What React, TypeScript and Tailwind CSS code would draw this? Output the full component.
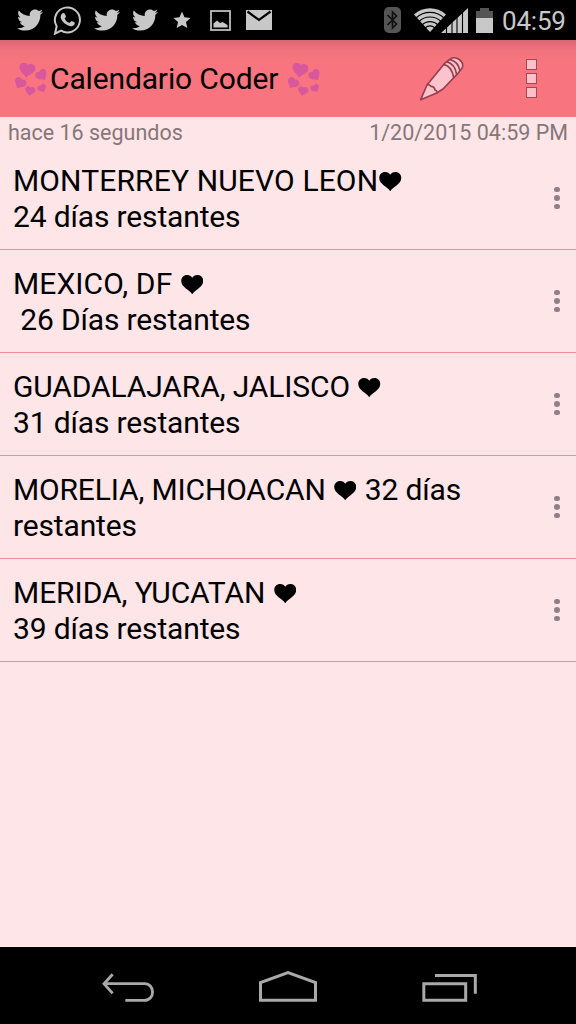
import { FaTwitter } from "react-icons/fa";

const HEART =
  "M11 19.5C9.500 15.500 0 12.500 0 6C0 2.400 2.500 0 5.800 0C8.300 0 10.200 1.200 11 2.700C11.800 1.200 13.700 0 16.200 0C19.500 0 22 2.400 22 6C22 12.500 12.500 15.500 11 19.500Z";

const Heart = () => (
  <svg
    viewBox="0 0 22 19.5"
    className="inline-block w-[22.500px] h-[19.500px] mx-px align-baseline"
    role="img"
    aria-label="♥"
  >
    <path d={HEART} />
  </svg>
);

const SpinningHearts = () => {
  const hearts = [
    { x: 13, y: 7.5, s: 0.66, r: 8 },
    { x: 28, y: 12.5, s: 0.5, r: -35 },
    { x: 5.8, y: 20.5, s: 0.5, r: 30 },
    { x: 16, y: 28.3, s: 0.43, r: 12 },
    { x: 28.3, y: 25.5, s: 0.37, r: -30 },
  ];
  return (
    <svg viewBox="0 0 34 34" className="w-[34px] h-[34px]" fill="#d8589b" stroke="#d8589b" strokeWidth="2" strokeLinejoin="round">
      {hearts.map((h, i) => (
        <path
          key={i}
          d={HEART}
          transform={`translate(${h.x} ${h.y}) rotate(${h.r}) scale(${h.s}) translate(-11 -9.75)`}
        />
      ))}
    </svg>
  );
};

const StatusBar = () => (
  <div className="h-10 bg-black flex items-center text-[#c8c8c8] pl-[17px] pr-[10px]">
    <FaTwitter className="w-[26px] h-[26px]" />
    <svg viewBox="160 14 84 90" className="w-7 h-[30px] ml-[9.500px] mr-px" aria-hidden="true">
      <path
        d="M166 100L171 78A37.500 37.500 0 1 1 184 91Z"
        fill="none"
        stroke="currentColor"
        strokeWidth="6"
      />
      <path
        d="M187 40c2-3 7-3 8 0l4 8c0 3-3 5-4 7c4 7 8 10 14 13c3-1 4-5 7-6l8 4c3 2 1 8-4 10c-7 4-15 0-21-4c-7-5-12-10-15-17c-2-6-1-12 3-15Z"
        fill="currentColor"
      />
    </svg>
    <FaTwitter className="w-[26px] h-[26px] ml-[12px]" />
    <FaTwitter className="w-[26px] h-[26px] ml-3" />
    <svg viewBox="0 0 18 18" className="w-[18px] h-[18px] ml-[15px]" fill="currentColor">
      <path d="M9 .5L11.500 6.200L17.500 6.900L13 10.900L14.300 17L9 13.900L3.700 17L5 10.900L.5 6.900L6.500 6.200Z" />
    </svg>
    <svg viewBox="0 0 21 21" className="w-[21px] h-[21px] ml-[19px]">
      <rect x="1" y="1" width="19" height="19" fill="none" stroke="currentColor" strokeWidth="1.700" />
      <path d="M3.500 17.500V13.500L7 10.500L10 13L12.500 12L17.500 15V17.500Z" fill="currentColor" />
    </svg>
    <svg viewBox="0 0 26 20" className="w-[26px] h-5 ml-[15px]">
      <path d="M0 0H26V20H0Z" fill="currentColor" />
      <path d="M1.500 1.500L13 10L24.500 1.500" fill="none" stroke="#000" strokeWidth="2.200" />
    </svg>
    <svg viewBox="0 0 17 26" className="w-[17px] h-[26px] ml-auto">
      <rect width="17" height="26" rx="5" fill="#555" />
      <path d="M3.500 8L12.500 17L8.500 21V5L12.500 9L3.500 18" fill="none" stroke="#111" strokeWidth="1.700" />
    </svg>
    <svg viewBox="0 0 32 24" className="w-8 h-6 ml-[13px]">
      <path d="M0 6.500C9-2 23-2 32 6.500L16 24Z" fill="currentColor" />
      <g fill="none" stroke="#000" strokeWidth="1.100">
        <path d="M2 10C10 2.500 22 2.500 30 10" />
        <path d="M5 13.500C11 7.500 21 7.500 27 13.500" />
        <path d="M8 17C12.500 12.500 19.500 12.500 24 17" />
        <path d="M11 20C14 17.500 18 17.500 21 20" />
      </g>
    </svg>
    <svg viewBox="0 0 27 25" className="w-[27px] h-[25px] -ml-[5px]">
      <path d="M0 25L27 0V25Z" fill="currentColor" />
      <path d="M5.500 0V25M11 0V25M16 0V25M21.500 0V25" stroke="#000" strokeWidth="1.100" />
    </svg>
    <svg viewBox="0 0 17 25" className="w-[17px] h-[25px] ml-2">
      <path d="M0 3H4V0H13V3H17V10H0Z" fill="#555" />
      <path d="M0 10H17V25H0Z" fill="currentColor" />
    </svg>
    <span className="ml-[9px] w-16 whitespace-nowrap text-[26px] leading-10 tracking-[-0.200px] pt-0.5">
      04:59
    </span>
  </div>
);

const Header = () => (
  <header className="h-[77px] bg-[#f8757f] bg-linear-to-b from-[#d96772] via-[#f2737d] via-[14%] to-[#f8757f] to-[30%] flex items-center pl-[14px] pr-[39px]">
    <div className="pt-0.5">
      <SpinningHearts />
    </div>
    <h1 className="text-[30px] w-[232px] ml-[2px] tracking-[-0.140px] whitespace-nowrap">
      Calendario Coder
    </h1>
    <div className="ml-[5px] pt-0.5">
      <SpinningHearts />
    </div>
    <svg
      viewBox="234 42 144 144"
      className="w-12 h-12 ml-auto mr-[60px]"
      fill="#fbc4cc"
      stroke="#96404f"
      strokeWidth="5"
      strokeLinejoin="round"
    >
      <path d="M242 176L261 132L313 68L331 54C348 43 376 62 366 82L353 98L309 144L290 156Z" />
      <path d="M261 132C267 128 270 133 273 136C280 136 284 142 285 147C290 148 291 152 290 155" fill="none" />
      <path d="M311 70C326 74 338 86 341 110M319 62C336 66 347 79 350 101M329 55C345 59 357 72 360 90" fill="none" />
    </svg>
    <div className="flex flex-col gap-[3px]">
      {[0, 1, 2].map((i) => (
        <span key={i} className="w-[11px] h-[11px] border-[1.500px] border-[#a34655] bg-[#fbc0c8]" />
      ))}
    </div>
  </header>
);

const NavBar = () => (
  <nav className="h-[77px] bg-black flex items-start pl-[100px] pt-[23px]">
    <svg viewBox="60 96 168 96" className="w-14 h-8 mt-0.5" fill="none" stroke="#a9a9a9" strokeWidth="8.500">
      <path d="M98 103L72 131L98 160M72 131H193C226 131 226 181 193 181H136" />
    </svg>
    <svg viewBox="534 90 180 99" className="w-[60px] h-[33px] ml-[102px]" fill="none" stroke="#a9a9a9" strokeWidth="9">
      <path d="M541.500 181V128L624 98L706.500 128V181Z" />
    </svg>
    <svg viewBox="1026 99 168 90" className="w-14 h-[30px] ml-[104px] mt-[3px]" fill="none" stroke="#a9a9a9" strokeWidth="9">
      <path d="M1031.500 131H1157V181H1031.500ZM1065 106.500H1186V161" />
    </svg>
  </nav>
);

const App = () => {
  const cities = [
    { name: "MONTERREY NUEVO LEON", after: "", days: "24 días restantes", spacing: "tracking-[0.140px]" },
    { name: "MEXICO, DF ", after: "", days: " 26 Días restantes", spacing: "tracking-[0.080px]" },
    { name: "GUADALAJARA, JALISCO ", after: "", days: "31 días restantes", spacing: "tracking-[-0.120px]" },
    { name: "MORELIA, MICHOACAN ", after: " 32 días", days: "restantes", spacing: "tracking-[-0.150px]" },
    { name: "MERIDA, YUCATAN ", after: "", days: "39 días restantes", spacing: "tracking-[-0.060px]" },
  ];
  return (
    <main className="w-[576px] h-[1024px] flex flex-col bg-[#fee5e8] text-black font-['Roboto',sans-serif] overflow-hidden">
      <StatusBar />
      <Header />
      <div className="h-[30px] flex justify-between px-2 pt-[3px] text-[21.500px] leading-[25px] text-[#857779]">
        <span>hace 16 segundos</span>
        <span>1/20/2015 04:59 PM</span>
      </div>
      <ul className="flex-1">
        {cities.map((city) => (
          <li
            key={city.name}
            className="h-[103px] border-b border-[#ec8f9b] flex items-center justify-between pl-[13px] pr-[16.500px]"
          >
            <p className="w-[490px] pt-px text-[30px] leading-[35.200px] tracking-[-0.150px] whitespace-pre">
              <span className={city.spacing}>{city.name}</span>
              <Heart />
              {city.after}
              <br />
              {city.days}
            </p>
            <div className="flex flex-col gap-[3px]">
              {[0, 1, 2].map((i) => (
                <span key={i} className="w-[5.500px] h-[5.500px] rounded-full bg-[#8f8183]" />
              ))}
            </div>
          </li>
        ))}
      </ul>
      <NavBar />
    </main>
  );
};

export default App;
